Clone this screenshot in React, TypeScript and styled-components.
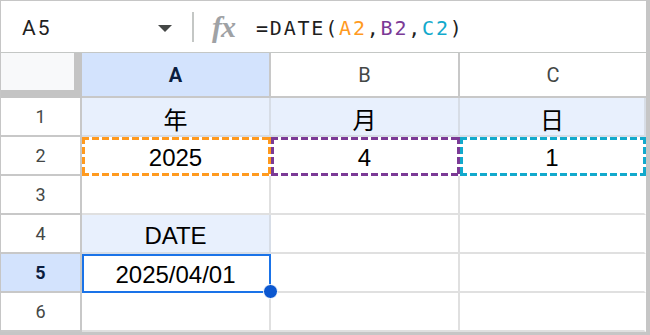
import styled, { createGlobalStyle, css } from 'styled-components';

const GlobalStyle = createGlobalStyle`
  html, body {
    margin: 0;
    padding: 0;
    background: #ffffff;
  }
  * {
    box-sizing: border-box;
  }
`;

const CELL_FONT = `'Liberation Sans', Arial, 'Noto Sans CJK JP', sans-serif`;
const HEAD_FONT = `Roboto, 'Liberation Sans', Arial, sans-serif`;

type Row = {
  cells: string[];
  tinted: boolean[];
};

const rows: Row[] = [
  { cells: ['年', '月', '日'], tinted: [true, true, true] },
  { cells: ['2025', '4', '1'], tinted: [false, false, false] },
  { cells: ['', '', ''], tinted: [false, false, false] },
  { cells: ['DATE', '', ''], tinted: [true, false, false] },
  { cells: ['2025/04/01', '', ''], tinted: [false, false, false] },
  { cells: ['', '', ''], tinted: [false, false, false] },
];

// range colours of the formula references (row 2)
const refColors = ['#ff9a1f', '#7b3a96', '#12a9cc'];

const App = () => {
  const selectedRow = 5;
  const selectedCol = 0;

  return (
    <>
      <GlobalStyle />
      <Frame>
        <FormulaBar>
          <NameBox>
            <CellName>A5</CellName>
            <Caret />
          </NameBox>
          <Divider />
          <FxIcon>fx</FxIcon>
          <Formula>
            =DATE(<Ref $color={refColors[0]}>A2</Ref>,
            <Ref $color={refColors[1]}>B2</Ref>,
            <Ref $color={refColors[2]}>C2</Ref>)
          </Formula>
        </FormulaBar>

        <Sheet>
          <Corner />
          {['A', 'B', 'C'].map((col, i) => (
            <ColHeader key={col} $selected={i === selectedCol} $last={i === 2}>
              {col}
            </ColHeader>
          ))}

          {rows.map((row, r) => (
            <>
              <RowHeader key={'h' + r} $selected={r + 1 === selectedRow}>
                {r + 1}
              </RowHeader>
              {row.cells.map((value, c) => (
                <Cell
                  key={r + '-' + c}
                  $tint={row.tinted[c]}
                  $dash={r === 1 ? refColors[c] : undefined}
                  $selected={r + 1 === selectedRow && c === selectedCol}
                  $last={c === 2}
                >
                  {value}
                  {r + 1 === selectedRow && c === selectedCol && <FillHandle />}
                </Cell>
              ))}
            </>
          ))}
        </Sheet>
      </Frame>
    </>
  );
};

export default App;

const Frame = styled.div`
  width: 650px;
  height: 335px;
  border-top: 1px solid #c6c6c6;
  border-left: 1px solid #c6c6c6;
  border-right: 4px solid #c6c6c6;
  border-bottom: 3px solid #c6c6c6;
  display: flex;
  flex-direction: column;
  overflow: hidden;
  background: #ffffff;
`;

const FormulaBar = styled.div`
  height: 52px;
  flex: none;
  display: flex;
  align-items: center;
  border-bottom: 1px solid #c4c7c5;
`;

const NameBox = styled.div`
  width: 191px;
  display: flex;
  align-items: center;
  padding: 3px 20px 0 21px;
`;

const CellName = styled.span`
  flex: 1;
  font-family: ${HEAD_FONT};
  font-size: 21px;
  letter-spacing: 2px;
  color: #1f1f1f;
`;

const Caret = styled.span`
  width: 0;
  height: 0;
  border-left: 7px solid transparent;
  border-right: 7px solid transparent;
  border-top: 7px solid #444746;
`;

const Divider = styled.div`
  width: 2px;
  height: 30px;
  background: #c4c7c5;
`;

const FxIcon = styled.span`
  margin: 0 21px 0 18px;
  font-family: 'Liberation Serif', 'DejaVu Serif', serif;
  font-style: italic;
  font-weight: bold;
  font-size: 30px;
  letter-spacing: -1px;
  color: #9fa2a5;
  padding-top: 1px;
`;

const Formula = styled.div`
  font-family: 'DejaVu Sans Mono', 'Liberation Mono', monospace;
  font-size: 20px;
  letter-spacing: 1.8px;
  color: #1f1f1f;
  padding-top: 3px;
  white-space: pre;
`;

const Ref = styled.span<{ $color: string }>`
  color: ${(p) => p.$color};
`;

const Sheet = styled.div`
  flex: 1;
  display: grid;
  grid-template-columns: 81px 189px 189px 186px;
  grid-template-rows: 45px repeat(6, 39px);
`;

const Corner = styled.div`
  background: #f8f9fa;
  border-right: 8px solid #c4c4c4;
  border-bottom: 8px solid #c4c4c4;
`;

const headerText = css`
  display: flex;
  align-items: center;
  justify-content: center;
  font-family: ${HEAD_FONT};
  color: #444746;
`;

const ColHeader = styled.div<{ $selected?: boolean; $last?: boolean }>`
  ${headerText};
  font-size: 20px;
  background: ${(p) => (p.$selected ? '#d3e3fd' : '#ffffff')};
  color: ${(p) => (p.$selected ? '#0b1d3f' : '#444746')};
  font-weight: ${(p) => (p.$selected ? 700 : 400)};
  border-right: ${(p) => (p.$last ? 'none' : '2px solid #c8c8c8')};
  border-bottom: 2px solid #c8c8c8;
  padding-top: 1px;
`;

const RowHeader = styled.div<{ $selected?: boolean }>`
  ${headerText};
  font-size: 18px;
  background: ${(p) => (p.$selected ? '#d3e3fd' : '#ffffff')};
  color: ${(p) => (p.$selected ? '#0b1d3f' : '#444746')};
  font-weight: ${(p) => (p.$selected ? 700 : 400)};
  border-right: 2px solid #c8c8c8;
  border-bottom: 2px solid #c8c8c8;
`;

const dashes = (color: string) => css`
  border-color: transparent;
  background-origin: border-box;
  background-clip: border-box;
  background-image:
    repeating-linear-gradient(90deg, ${color} 0 7px, transparent 7px 10px),
    repeating-linear-gradient(90deg, ${color} 0 7px, transparent 7px 10px),
    repeating-linear-gradient(180deg, ${color} 0 7px, transparent 7px 10px),
    repeating-linear-gradient(180deg, ${color} 0 7px, transparent 7px 10px);
  background-size: 100% 3px, 100% 3px, 3px 100%, 3px 100%;
  background-position: top left, bottom left, top left, top right;
  background-repeat: no-repeat;
`;

const Cell = styled.div<{
  $tint?: boolean;
  $dash?: string;
  $selected?: boolean;
  $last?: boolean;
}>`
  position: relative;
  display: flex;
  align-items: center;
  justify-content: center;
  padding-top: 4px;
  font-family: ${CELL_FONT};
  font-size: 24px;
  color: #000000;
  background-color: ${(p) => (p.$tint ? '#e8f0fd' : '#ffffff')};
  border-right: 2px solid #e0e0e0;
  border-bottom: 2px solid #e0e0e0;
  ${(p) => p.$last && 'border-right-color: transparent;'}
  ${(p) => p.$tint && 'border-color: #d7dde6;'}
  ${(p) => p.$dash && dashes(p.$dash)}
  ${(p) =>
    p.$selected &&
    css`
      outline: 2px solid #1a73e8;
      outline-offset: -2px;
      border-color: transparent;
    `}
`;

const FillHandle = styled.span`
  position: absolute;
  right: -9px;
  bottom: -8px;
  width: 15px;
  height: 15px;
  border-radius: 50%;
  background: #0b57d0;
  border: 1px solid #ffffff;
  z-index: 2;
`;
